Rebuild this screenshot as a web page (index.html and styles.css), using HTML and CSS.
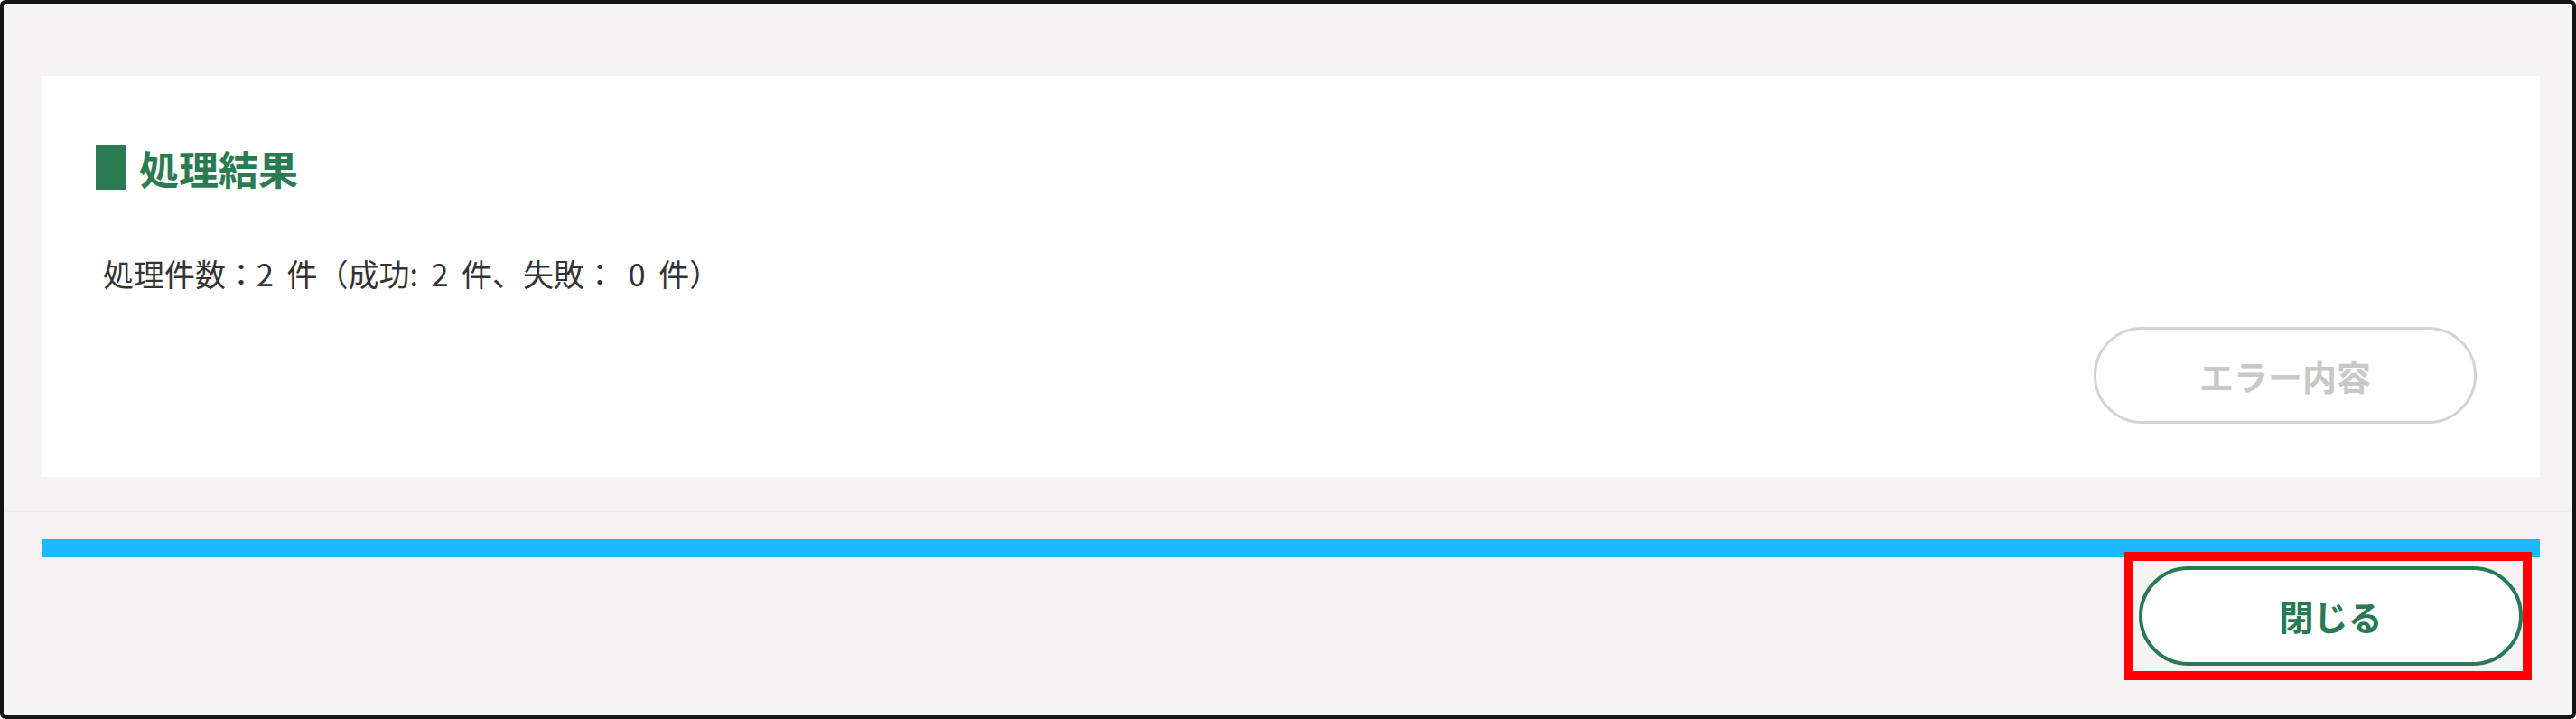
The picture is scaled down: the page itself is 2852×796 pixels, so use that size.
FILE: index.html
```html
<!DOCTYPE html>
<html lang="ja">

<head>
    <meta charset="UTF-8">
    <meta name="viewport" content="width=device-width, initial-scale=1.0">
    <title>処理結果</title>
    <link rel="stylesheet" href="styles.css">
</head>

<body>
    <div class="dialog">
        <div class="dialog-body">
            <div class="result-card">
                <h2 class="section-title">処理結果</h2>
                <p class="result-summary">処理件数：2 件（成功: 2 件、失敗： 0 件）</p>
                <div class="card-actions">
                    <button class="btn btn-disabled" disabled>エラー内容</button>
                </div>
            </div>
        </div>
        <div class="dialog-footer">
            <div class="progress-bar"></div>
            <div class="footer-actions">
                <div class="highlight-wrap">
                    <button class="btn btn-close">閉じる</button>
                    <span class="highlight-box"></span>
                </div>
            </div>
        </div>
    </div>
</body>

</html>
```

FILE: styles.css
```css
body {
    margin: 0;
    font-family: "Noto Sans CJK JP", "Noto Sans", sans-serif;
    background-color: #ffffff;
}

.dialog {
    height: 796px;
    box-sizing: border-box;
    border: 4px solid #141414;
    border-radius: 6px;
    background-color: #f5f3f4;
    display: flex;
    flex-direction: column;
}

.dialog-body {
    padding: 80px 36px 38px 42px;
}

.result-card {
    background-color: #fff;
    padding: 77px 70px 59px 60px;
}

.section-title {
    display: flex;
    align-items: center;
    gap: 14px;
    margin: 0;
    height: 49px;
    font-size: 44px;
    font-weight: 700;
    color: #2a7a52;
    line-height: 1;
}

.section-title::before {
    content: "";
    width: 34px;
    height: 49px;
    background-color: #2a7a52;
}

.result-summary {
    margin: 67px 0 0 8px;
    font-size: 34px;
    line-height: 51px;
    word-spacing: 7px;
    color: #333;
}

.card-actions {
    display: flex;
    justify-content: flex-end;
    margin-top: 34px;
}

.btn {
    display: flex;
    align-items: center;
    justify-content: center;
    box-sizing: border-box;
    background-color: #fff;
    font-family: inherit;
    font-weight: 700;
    font-size: 38px;
    line-height: 1;
    padding: 0;
}

.btn-disabled {
    width: 424px;
    height: 107px;
    border: 3px solid #d3d3d3;
    border-radius: 54px;
    color: #c8c8c8;
}

.dialog-footer {
    flex: 1;
    border-top: 1px solid #efedee;
    padding: 30px 36px 0 42px;
}

.progress-bar {
    height: 20px;
    background-color: #1ab8ff;
}

.footer-actions {
    display: flex;
    justify-content: flex-end;
    padding: 10px 19px 0 0;
}

.highlight-wrap {
    position: relative;
}

.btn-close {
    width: 425px;
    height: 110px;
    border: 4px solid #277a53;
    border-radius: 55px;
    color: #277a53;
    cursor: pointer;
}

.highlight-box {
    position: absolute;
    top: -16px;
    left: -16px;
    right: -10px;
    bottom: -16px;
    border: 10px solid #ff0000;
    pointer-events: none;
}
```
